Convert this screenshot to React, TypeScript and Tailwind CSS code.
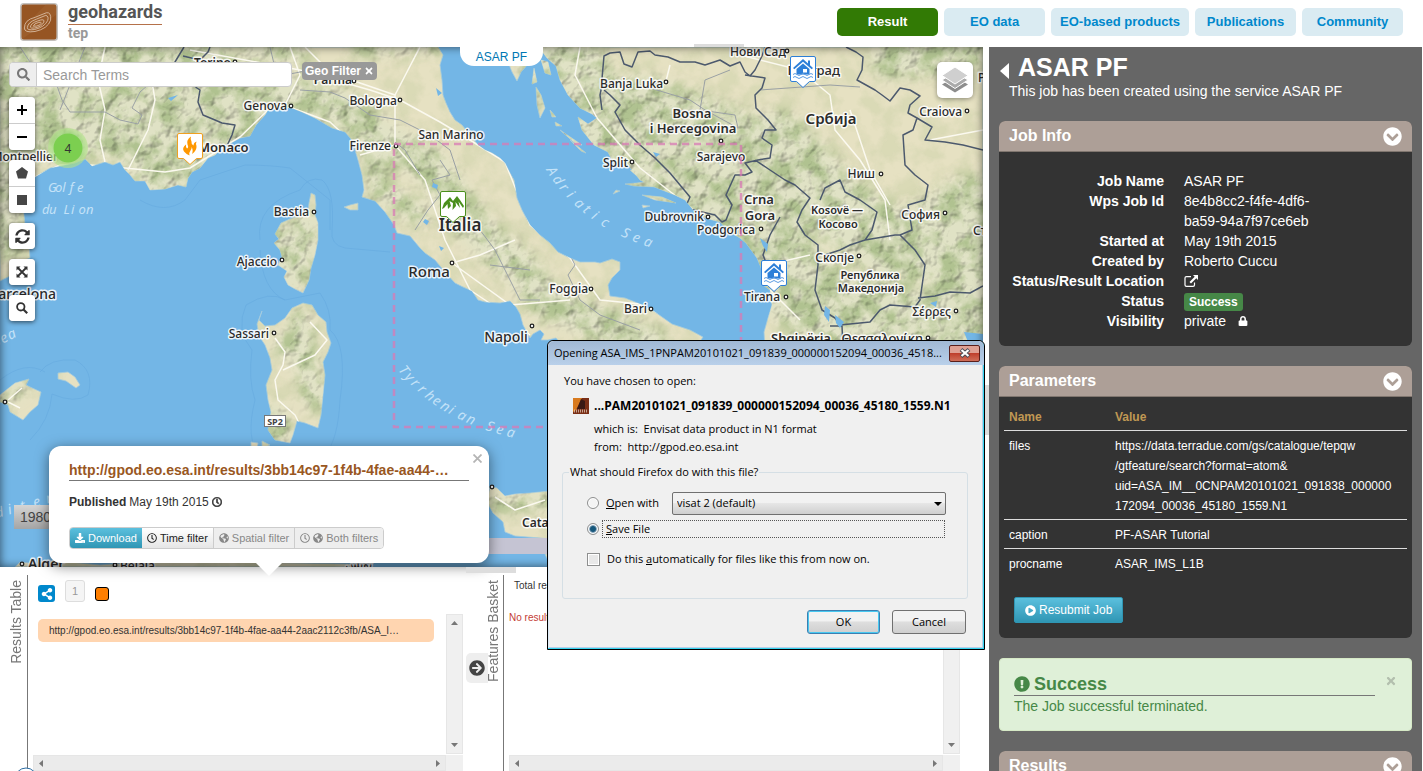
import { useState } from "react";
import type { ReactNode } from "react";
import {
  FaArrowCircleRight,
  FaChevronCircleDown,
  FaDownload,
  FaExclamationCircle,
  FaGlobeAmericas,
  FaLock,
  FaPlayCircle,
  FaRegClock,
  FaSearch,
  FaShareAlt,
  FaSyncAlt,
  FaTimes,
} from "react-icons/fa";

const LAND = [
  "M0 47L0 281L10 276L20 262L30 258L29 245L26 235L24 215L22 200L28 185L35 177L50 168L60 166L75 163L85 159L92 166L105 162L113 165L120 162L125 170L130 175L135 181L145 181L150 190L165 189L178 185L186 187L188 178L192 172L200 168L208 158L215 155L222 148L240 138L250 136L256 125L265 115L268 110L280 107L292 108L302 112L315 118L332 128L345 132L352 140L355 150L358 160L362 175L364 190L362 197L375 201L385 212L394 225L397 233L410 236L420 248L425 253L435 260L445 272L455 283L463 287L472 291L478 300L485 302L500 303L510 301L516 307L520 314L523 325L530 338L533 334L540 330L544 334L541 340L548 340L556 338L562 345L600 400L660 400L703 337L690 330L672 324L655 312L640 304L625 298L610 296L608 285L612 278L620 270L620 262L612 259L600 263L595 262L580 262L570 258L558 252L550 243L540 235L530 225L522 210L517 198L514 180L510 173L505 163L500 158L492 153L485 150L478 145L470 135L462 125L455 120L450 112L446 103L443 95L442 80L440 65L443 55L438 47Z",
  "M505 47L508 62L512 72L517 81L521 72L528 64L533 54L541 50L547 58L556 66L560 80L568 95L580 108L592 114L597 118L588 124L578 117L582 130L594 145L608 152L612 160L628 165L640 180L652 186L662 190L675 195L685 200L695 212L705 218L720 222L730 232L740 238L746 243L757 258L762 270L763 285L770 290L772 305L768 318L764 332L765 350L983 350L983 47Z",
  "M311 193L315 195L316 205L315 215L318 223L318 240L315 255L311 268L309 280L303 293L295 289L288 285L284 277L287 271L278 265L282 257L280 250L274 243L279 239L275 234L281 223L290 219L300 215L308 212L309 203Z",
  "M303 303L312 305L318 315L326 322L327 332L331 343L328 352L323 362L325 375L323 395L321 415L318 428L305 423L297 421L293 435L290 443L275 440L268 430L271 412L268 400L266 385L272 370L270 358L265 345L259 336L257 324L262 311L259 320L265 326L275 325L285 318L292 308Z",
  "M58 373L68 372L75 377L80 385L76 388L66 381L58 379Z",
  "M0 395L15 383L29 379L26 385L30 387L41 392L38 405L30 412L23 420L10 412L8 405L0 402Z",
  "M490 486L497 488L505 496L515 494L530 493L560 490L560 540L540 538L515 536L505 532L503 522L493 513L487 502Z",
  "M15 567L20 562L40 564L60 561L100 565L160 560L250 562L350 564L370 567Z",
  "M545 554L560 553L560 567L551 567Z",
  "M251 442L258 443L257 450L251 447Z M262 441L270 445L262 449Z",
  "M344 207L350 205L358 203L358 210L350 210Z M536 87L541 95L545 108L540 118L537 105Z M541 60L548 62L551 75L545 73Z M534 68L537 82L532 84Z",
  "M555 122L562 126L556 126Z M560 130L582 145L577 145Z M550 110L556 117L552 117Z M630 170L645 172L652 176L638 177Z M625 184L648 182L658 187L634 186Z M616 190L620 191L613 194Z M642 195L662 197L676 203L655 200Z M642 205L650 206L643 208Z M570 140L586 153L581 151Z",
];

const HILLS = [
  { d: "M0 70L60 60L130 75L200 70L230 110L160 140L110 120L30 130", w: 70 },
  { d: "M180 60L230 90L215 130L160 165", w: 62 },
  { d: "M0 170L5 240", w: 40 },
  { d: "M240 112L290 92L340 108L385 140L430 165L455 200L480 235L515 262L545 300L590 320L650 345", w: 36 },
  { d: "M372 150L380 190L420 215", w: 22 },
  { d: "M560 60L590 110L640 140L700 190L760 235L800 290L850 320L920 330", w: 80 },
  { d: "M640 110L700 130L790 170L840 210L900 250L970 210L960 330", w: 70 },
  { d: "M890 60L970 50M720 150L780 130L860 210", w: 40 },
  { d: "M285 240L295 275L305 225", w: 30 },
  { d: "M300 320L305 360L315 400M285 345L290 350M275 415L280 435", w: 24 },
  { d: "M490 505L560 500M0 400L20 388", w: 16 },
  { d: "M360 47L450 40M250 50L300 55", w: 20 },
];

const BORDERS =
  "M184 47L175 62L185 78L197 88L200 90L198 102L203 115L215 120L222 123L235 125L232 135L226 148M183 56L200 60L208 52L210 47M602 110L600 95L601 90L604 56L610 53L620 52L624 64L632 67L638 52L650 51L655 55L668 57L680 62L695 62L705 65L720 60L730 66L740 62L745 72L750 76L755 70L762 56L765 47M745 75L765 78L762 88L755 95L756 108L768 120L776 130L765 130L762 138L772 145L770 158L758 160L745 163L752 172L745 175L735 175L726 195L732 205L726 220L722 222M604 90L610 95L620 105L615 112L625 130L640 145L655 158L670 173L690 197L685 208L715 215L722 222M755 160L770 170L785 180L795 185L810 198L802 210L797 222L805 235L818 245L818 265L815 290L822 310L835 318L840 325L870 322L880 310L890 305L915 307L920 300L925 265L915 250L900 235L895 235L865 240L850 245L840 250L825 255M820 200L825 188L840 180L845 192L860 200L877 212L872 230L865 240M780 217L770 235L763 255L767 265L763 285M830 326L842 326L843 347M918 298L935 296L950 292L970 293L983 286M846 47L856 52L863 57L862 70L857 80L875 90L882 95L890 101L900 88L910 90L920 96L910 105L908 113L917 118L913 130L903 135L905 165L915 175L928 185L925 200L908 205L912 230L900 235M917 118L932 127L925 140L945 142L963 145L983 150";
const BORDERS_MINOR =
  "M20 47L30 62L42 66L55 80L62 100L70 112L85 112L105 112L120 120L138 124L142 115L132 108L140 92L148 85L170 83L175 78M60 110L85 47M270 47L275 68L290 74L310 70M300 90L330 92L345 98L370 115L400 120L430 135L450 150L460 180M440 160L450 175L432 180L440 195L428 210L415 230M480 230L495 250L510 280L520 300L540 300M420 175L405 150L395 142M490 265L530 270M640 85L690 100L705 110L738 128L735 115L700 110L705 80L730 70M760 90L830 85L860 87M570 255L575 265L568 275L580 300L600 315L640 330";
const ROADS =
  "M35 177L60 165L90 165L125 168L165 172L190 168L240 137L268 110L292 108L330 122L355 145M105 162L100 140L105 110L98 80L105 47M128 170L148 130L155 100L150 70M190 50L300 70L370 90L400 100L440 122L470 140L505 162L530 225L570 258L600 300L640 304L690 328M285 105L300 75L290 47M305 47L330 72L360 83L395 95L420 47M395 95L395 145L425 180L445 240L470 290L500 310L530 335M395 145L360 155M452 263L480 255L515 240M452 263L510 305L570 300M580 47L575 75L597 118L640 168L700 215M670 65L665 85M740 55L800 70L830 95L835 130L860 160L885 200L890 240M780 262L810 255M770 290L800 320M890 205L870 170L850 110M983 130L930 140M275 338L285 352L283 365L275 380L278 400L295 415L300 425M283 370L315 355L327 340L310 322M495 497L515 510L545 500M8 400L22 388M8 402L20 408";

type Label = [string, number, number, number, string, "end" | "middle" | "start"];
const LABELS: Label[] = [
  ["Torino", 231, 67, 12, "font-semibold", "end"],
  ["Parma", 352, 84, 12, "font-semibold", "end"],
  ["Genova", 287, 110, 12, "font-medium", "end"],
  ["Bologna", 397, 105, 12, "font-medium", "end"],
  ["San Marino", 451, 139, 12, "font-medium", "middle"],
  ["Firenze", 391, 150, 12, "font-medium", "end"],
  ["Monaco", 198, 152, 13, "font-semibold", "start"],
  ["Montpellier", 58, 161, 12, "font-medium", "end"],
  ["Bastia", 309, 216, 12, "font-medium", "end"],
  ["Ajaccio", 277, 266, 12, "font-medium", "end"],
  ["Sassari", 269, 338, 12, "font-medium", "end"],
  ["Barcelona", 56, 299, 14, "font-medium", "end"],
  ["Italia", 460, 231, 17, "font-semibold", "middle"],
  ["Roma", 429, 277, 15, "font-medium", "middle"],
  ["Napoli", 506, 342, 14, "font-medium", "middle"],
  ["Foggia", 588, 293, 12, "font-medium", "end"],
  ["Bari", 647, 313, 12, "font-medium", "end"],
  ["Catania", 522, 527, 12, "font-semibold", "start"],
  ["Нови Сад", 730, 56, 12, "font-medium", "start"],
  ["Београд", 840, 75, 13, "font-medium", "end"],
  ["Banja Luka", 663, 88, 12, "font-medium", "end"],
  ["Bosna", 692, 118, 13, "font-semibold", "middle"],
  ["i Hercegovina", 693, 133, 13, "font-semibold", "middle"],
  ["Sarajevo", 721, 161, 12, "font-medium", "middle"],
  ["Split", 628, 167, 12, "font-medium", "end"],
  ["Србија", 831, 124, 15, "font-semibold", "middle"],
  ["Ниш", 875, 178, 12, "font-medium", "end"],
  ["Craiova", 962, 116, 12, "font-medium", "end"],
  ["Pitești", 978, 82, 12, "font-medium", "start"],
  ["Crna", 759, 204, 13, "font-semibold", "middle"],
  ["Gora", 760, 220, 13, "font-semibold", "middle"],
  ["Kosovë —", 837, 214, 11, "font-semibold", "middle"],
  ["Косово", 838, 228, 11, "font-semibold", "middle"],
  ["София", 940, 219, 12, "font-medium", "end"],
  ["Стара Загора", 973, 235, 12, "font-medium", "start"],
  ["Dubrovnik", 704, 221, 12, "font-medium", "end"],
  ["Podgorica", 755, 234, 12, "font-medium", "end"],
  ["Скопје", 854, 262, 12, "font-medium", "end"],
  ["Република", 870, 279, 11, "font-semibold", "middle"],
  ["Македонија", 871, 292, 11, "font-semibold", "middle"],
  ["Tirana", 780, 301, 12, "font-medium", "end"],
  ["Σέρρες", 951, 316, 12, "font-medium", "end"],
  ["Shqipëria", 801, 343, 13, "font-semibold", "middle"],
  ["Θεσσαλονίκη", 923, 343, 13, "font-medium", "end"],
  ["Alger", 28, 569, 14, "font-semibold", "start"],
  ["Béjaïa", 120, 570, 12, "font-medium", "start"],
  ["تونس", 345, 568, 12, "font-medium", "start"],
];
const TOWNS = [
  [235, 62], [354, 81], [291, 106], [400, 100], [396, 146], [60, 156], [314, 212], [282, 260], [274, 333],
  [452, 263], [532, 326], [591, 289], [651, 309], [787, 51], [666, 82], [721, 141], [632, 162], [881, 174],
  [967, 111], [945, 213], [708, 217], [761, 229], [859, 256], [786, 297], [956, 311], [928, 338], [22, 564],
  [115, 565], [492, 487], [5, 402],
];

type Pt = [number, number];

/* Spreads the letters of a sea name along a quadratic curve. */
function SeaLabel({ text, from, via, to, size = 14 }: { text: string; from: Pt; via: Pt; to: Pt; size?: number }) {
  const steps = [...text].map((_, i) => {
    const t = i / (text.length - 1);
    const at = (k: 0 | 1) => (1 - t) ** 2 * from[k] + 2 * t * (1 - t) * via[k] + t * t * to[k];
    const slope = (k: 0 | 1) => 2 * (1 - t) * (via[k] - from[k]) + 2 * t * (to[k] - via[k]);
    return { x: at(0), y: at(1), r: (Math.atan2(slope(1), slope(0)) * 180) / Math.PI };
  });
  return (
    <text
      x={steps.map((s) => s.x.toFixed(1)).join(" ")}
      y={steps.map((s) => s.y.toFixed(1)).join(" ")}
      rotate={steps.map((s) => s.r.toFixed(1)).join(" ")}
      fontSize={size}
      className="fill-[#c3e2f8] italic"
    >
      {text}
    </text>
  );
}

function Pin({ x, y, color, children }: { x: number; y: number; color: string; children: ReactNode }) {
  return (
    <g transform={`translate(${x} ${y})`}>
      <path d="M2 0.500H24Q25.500 0.500 25.500 2V24Q25.500 25.500 24 25.500H19.500L13 31.500L6.500 25.500H2Q0.500 25.500 0.500 24V2Q0.500 0.500 2 0.500Z" fill="#fff" stroke={color} />
      {children}
    </g>
  );
}

function House() {
  return (
    <g fill="#2d7fd8" stroke="none">
      <path d="M13 3L3 12L4.300 13.300L13 5.800L21.700 13.300L23 12L20 9.300V4.500H18V7.500Z" />
      <path d="M13 7.500L6.500 13V18.500H19.500V13Z" />
      <rect x="13" y="13" width="4" height="3.500" fill="#fff" />
      <path d="M3 18.500Q5 16.500 7 18.500T11 18.500T15 18.500T19 18.500T23 18.500M3 21.500Q5 19.500 7 21.500T11 21.500T15 21.500T19 21.500T23 21.500" fill="none" stroke="#5b9be2" />
    </g>
  );
}

function MapCanvas() {
  return (
    <svg viewBox="0 47 983 520" preserveAspectRatio="xMinYMin slice" className="absolute inset-0 h-full w-full font-['Noto_Sans',sans-serif]" aria-label="Map of Italy and the Balkans">
      <defs>
        <clipPath id="land">
          {LAND.map((d) => <path key={d} d={d} />)}
        </clipPath>
        <filter id="soft" x="-20%" y="-20%" width="140%" height="140%">
          <feGaussianBlur stdDeviation="7" />
        </filter>
        <filter id="relief" x="0" y="0" width="100%" height="100%" colorInterpolationFilters="sRGB">
          <feTurbulence type="fractalNoise" baseFrequency="0.07" numOctaves="3" seed="7" result="n" />
          <feColorMatrix in="n" type="matrix" values="0 0 0 0 0  0 0 0 0 0  0 0 0 0 0  1 0 0 0 0" result="h" />
          <feDiffuseLighting in="h" surfaceScale="2.200" diffuseConstant="1.200" lightingColor="#fff">
            <feDistantLight azimuth="225" elevation="58" />
          </feDiffuseLighting>
        </filter>
        <filter id="woods" x="0" y="0" width="100%" height="100%" colorInterpolationFilters="sRGB">
          <feTurbulence type="fractalNoise" baseFrequency="0.05" numOctaves="4" seed="21" />
          <feColorMatrix type="matrix" values="0 0 0 0 0.660  0 0 0 0 0.740  0 0 0 0 0.530  3.200 0 0 0 -1.250" />
        </filter>
        <mask id="hills" maskUnits="userSpaceOnUse" x="0" y="47" width="983" height="520">
          <g filter="url(#soft)" fill="none" stroke="#fff" strokeLinejoin="round" strokeLinecap="round">
            {HILLS.map((h) => <path key={h.d} d={h.d} strokeWidth={h.w} />)}
          </g>
        </mask>
        <radialGradient id="cluster">
          <stop offset="0.7" stopColor="#7ccf50" />
          <stop offset="0.75" stopColor="#9fdc7c" stopOpacity="0.700" />
          <stop offset="1" stopColor="#b5e28c" stopOpacity="0.600" />
        </radialGradient>
      </defs>
      <rect y="47" width="983" height="520" fill="#73b6e6" />
      <g fill="none" stroke="#66aadf" opacity="0.600">
        <path d="M260 240Q255 205 300 190Q308 176 322 180Q335 190 332 230Q330 245 345 248L390 252M260 250Q262 290 285 300L320 293Q332 310 330 330Q348 345 340 400Q338 440 325 455L260 455Q245 440 255 400Q248 380 252 350Q235 330 246 305Q270 290 285 300M40 372Q50 358 75 360Q95 370 88 395Q75 404 52 394Q50 420 30 440M0 380Q25 360 45 372M140 200Q165 215 185 200L200 180L245 165Q270 165 290 168L330 200L330 230" />
      </g>
      <g fill="#e6e1c2" stroke="#a5cbe0" strokeWidth="0.800">
        {LAND.map((d) => <path key={d} d={d} />)}
      </g>
      <g clipPath="url(#land)">
        <rect y="47" width="983" height="520" filter="url(#woods)" opacity="0.200" />
        <g mask="url(#hills)">
          <rect y="47" width="983" height="520" fill="#d6d8b2" opacity="0.750" />
          <rect y="47" width="983" height="520" filter="url(#woods)" opacity="0.850" />
          <rect y="47" width="983" height="520" filter="url(#relief)" className="mix-blend-multiply" />
        </g>
        <path d={ROADS} fill="none" stroke="#fbf9ef" strokeWidth="1.500" strokeLinejoin="round" />
        <path d={BORDERS_MINOR} fill="none" stroke="#9aa0a4" strokeLinejoin="round" />
        <path d={BORDERS} fill="none" stroke="#4c596d" strokeWidth="1.500" strokeLinejoin="round" />
        <path d="M425 219L429 221L427 225L423 222ZM439 246L444 248L441 251ZM433 183L438 185L437 189L432 187ZM760 238L768 244L767 252L763 246ZM825 306L830 310L829 322L824 315ZM835 315L844 322L840 328L836 323ZM653 152L660 154L656 157ZM930 303L937 301L936 307ZM964 332L983 334V343L968 342ZM436 88L442 93L438 96ZM168 98L178 95L171 101Z" fill="#73b6e6" />
      </g>

      <g>
        <SeaLabel text="Golfe" from={[48, 192]} via={[62, 192]} to={[77, 192]} size={13} />
        <SeaLabel text="du Lion" from={[42, 214]} via={[63, 214]} to={[86, 214]} size={13} />
        <SeaLabel text="Adriatic Sea" from={[546, 170]} via={[578, 222]} to={[643, 245]} />
        <SeaLabel text="Tyrrhenian Sea" from={[398, 370]} via={[435, 418]} to={[506, 436]} />
        <SeaLabel text="Mediterranean Sea" from={[-28, 526]} via={[70, 495]} to={[180, 470]} />
        <SeaLabel text="Balearic Sea" from={[-78, 390]} via={[-30, 360]} to={[10, 340]} />
      </g>

      <g className="fill-[#2b2b2b]" stroke="#fff" strokeWidth="3" strokeOpacity="0.850" strokeLinejoin="round" paintOrder="stroke">
        {LABELS.map(([text, x, y, size, weight, anchor]) => (
          <text key={text} x={x} y={y} fontSize={size} textAnchor={anchor} className={weight}>{text}</text>
        ))}
      </g>
      <g fill="#fff" stroke="#222" strokeWidth="1.300">
        {TOWNS.map(([x, y]) => <circle key={`${x}-${y}`} cx={x} cy={y} r="1.800" />)}
      </g>
      <rect x="264.500" y="415.500" width="21" height="11" fill="#fff" stroke="#777" />
      <text x="275" y="425" fontSize="9" textAnchor="middle" className="fill-[#444] font-bold">SP2</text>

      <rect x="394" y="144" width="347" height="283" fill="none" stroke="#d87ab4" strokeOpacity="0.750" strokeWidth="2.500" strokeDasharray="7 5" />

      <circle cx="68" cy="148" r="20" fill="url(#cluster)" />
      <text x="68" y="153" fontSize="12" textAnchor="middle" className="fill-[#333]">4</text>
      <Pin x={177} y={133} color="#f0a020">
        <path d="M14 3.500Q9 7 10.500 11.500Q12 14.500 10 15.500Q8.500 14 9 11.500Q4.500 15 7 18.500Q9 21 12.500 22.500Q11.500 20 13.500 17.500Q15 15.500 14.500 14Q16.500 17 15 21Q20 17.500 19.500 13Q18.500 11 19.500 8.500Q16.500 9.500 16.500 12.500Q14 11 14.500 8.500Q13 6.500 14 3.500Z" fill="#ff9800" />
      </Pin>
      <Pin x={440} y={191} color="#4a8f1c">
        <path d="M2 18L4 12L10 6L13 10L17 5L20 9L24 15L23 17L18.500 10.500L20 17L15.500 11L16 15L12.500 19L13 12L9.500 10L11 15L8 18L7.500 13L4 17Z" fill="#4a8f1c" />
      </Pin>
      <Pin x={790} y={56} color="#2d7fd8"><House /></Pin>
      <Pin x={761} y={260} color="#2d7fd8"><House /></Pin>
    </svg>
  );
}

const toolGroup = "flex flex-col gap-px overflow-hidden rounded bg-[#ccc] shadow-[0_1px_5px_rgba(0,0,0,0.65)]";
const tool = "flex h-[26px] w-[26px] items-center justify-center bg-white text-[#333]";

function MapTools() {
  return (
    <div className="flex flex-col items-start gap-[10px]">
      <div className={toolGroup}>
        <button className={tool} aria-label="Zoom in">
          <svg width="12" height="12"><path d="M6 1V11M1 6H11" stroke="#000" strokeWidth="2" /></svg>
        </button>
        <button className={tool} aria-label="Zoom out">
          <svg width="12" height="12"><path d="M1 6H11" stroke="#000" strokeWidth="2" /></svg>
        </button>
      </div>
      <div className={toolGroup}>
        <button className={tool} aria-label="Draw a polygon">
          <svg width="12" height="12"><path d="M6 0L12 4.500L10 11.500H2L0 4.500Z" fill="#464646" /></svg>
        </button>
        <button className={tool} aria-label="Draw a rectangle">
          <svg width="10" height="10"><rect width="10" height="10" fill="#464646" /></svg>
        </button>
      </div>
      <div className={toolGroup}>
        <button className={tool} aria-label="Refresh"><FaSyncAlt size={15} /></button>
      </div>
      <div className={toolGroup}>
        <button className={tool} aria-label="Full screen">
          <svg width="12" height="12" viewBox="0 0 12 12"><path d="M2 2L10 10M10 2L2 10" stroke="#333" strokeWidth="1.800" /><path d="M0.500 0.500H4.500L0.500 4.500ZM11.500 0.500V4.500L7.500 0.500ZM0.500 11.500V7.500L4.500 11.500ZM11.500 11.500H7.500L11.500 7.500Z" fill="#333" /></svg>
        </button>
      </div>
      <div className={toolGroup}>
        <button className={tool} aria-label="Find a place">
          <svg width="12" height="12" viewBox="0 0 12 12"><circle cx="4.800" cy="4.800" r="3.700" fill="none" stroke="#333" strokeWidth="1.800" /><path d="M7.500 7.500L11.200 11.200" stroke="#333" strokeWidth="2.200" /></svg>
        </button>
      </div>
    </div>
  );
}

function ResultPopup() {
  const filter = "flex h-full items-center gap-[3px] px-[5px]";
  return (
    <div className="absolute bottom-1 left-[49px] w-[440px] rounded-xl bg-white shadow-[0_3px_14px_rgba(0,0,0,0.5)]">
      <button className="absolute top-1 right-1 flex h-4 w-4 items-center justify-center" aria-label="Close">
        <svg width="9" height="9"><path d="M0.500 0.500L8.500 8.500M8.500 0.500L0.500 8.500" stroke="#b5b5b5" strokeWidth="1.800" /></svg>
      </button>
      <div className="flex flex-col px-5 py-[14px] text-xs text-[#333]">
        <a href="#result" className="truncate border-b border-[#777] pr-4 text-sm leading-5 font-bold text-[#99571f]">
          http://gpod.eo.esa.int/results/3bb14c97-1f4b-4fae-aa44-2aac2112c3fb
        </a>
        <p className="flex items-center gap-[3px] pt-[11px] pb-[15px] leading-5">
          <b>Published</b> May 19th 2015 <FaRegClock size={10} strokeWidth={30} stroke="currentColor" />
        </p>
        <div className="flex h-[22px] w-fit overflow-hidden rounded border border-[#ccc] text-[11px]">
          <button className={`${filter} bg-linear-to-b from-[#5bc0de] to-[#2f96b4] text-white`}><FaDownload size={10} />Download</button>
          <button className={`${filter} border-r border-[#ccc] bg-linear-to-b from-white to-[#e6e6e6] text-[#222]`}><FaRegClock size={10} />Time filter</button>
          <button disabled className={`${filter} border-r border-[#ccc] bg-[#eee] text-[#888]`}><FaGlobeAmericas size={10} />Spatial filter</button>
          <button disabled className={`${filter} bg-[#eee] text-[#888]`}><FaRegClock size={10} /><FaGlobeAmericas size={10} />Both filters</button>
        </div>
      </div>
      <svg width="26" height="14" className="absolute top-full left-[207px]"><path d="M0 0H26L13 13Z" fill="#fff" /></svg>
    </div>
  );
}

function MapPanel() {
  return (
    <section className="relative min-h-0 flex-1">
      <div className="absolute inset-0 overflow-hidden">
        <MapCanvas />
        <div className="pointer-events-none absolute inset-0 shadow-[inset_0_0_10px_rgba(0,0,0,0.6)]" />
      </div>
      <div className="relative flex items-start justify-between">
        <div className="flex flex-col gap-[10px] px-[9px] pt-[15px]">
          <div className="flex items-start gap-[10px]">
            <div className="flex h-[25px] w-[283px] overflow-hidden rounded border border-[#ccc] bg-white">
              <label htmlFor="terms" className="flex w-[27px] items-center justify-center border-r border-[#ccc] bg-[#eee] text-[#777]"><FaSearch size={13} /></label>
              <input id="terms" placeholder="Search Terms" className="min-w-0 flex-1 px-[6px] text-sm placeholder:text-[#999] focus:outline-none" />
            </div>
            <button className="flex h-[18px] items-center gap-[3px] rounded bg-[#999] px-[3px] text-xs font-bold text-white">Geo Filter <FaTimes size={10} /></button>
          </div>
          <MapTools />
        </div>
        <button className="m-[15px] mr-[10px] flex h-9 w-9 items-center justify-center rounded-[5px] bg-white shadow-[0_1px_5px_rgba(0,0,0,0.4)]" aria-label="Layers">
          <svg width="26" height="26" viewBox="0 0 26 26">
            <path d="M13 9.500L26 17.500L13 25.500L0 17.500Z" fill="#8d8d8d" />
            <path d="M13 5L26 13L13 21.500L0 13Z" fill="#aaa" stroke="#fff" />
            <path d="M13 0L26 8.500L13 17L0 8.500Z" fill="#cfcfcf" stroke="#fff" />
          </svg>
        </button>
      </div>
      <a href="#asar" className="absolute top-0 left-[460px] flex h-[19px] w-[83px] items-center justify-center rounded-b-[14px] bg-white text-xs text-[#0077b3]">ASAR PF</a>
      <div className="absolute right-0 bottom-[13px] left-20 h-4 bg-[#c5c4d3]" />
      <div className="absolute bottom-[38px] left-[14px] h-6 w-20 bg-linear-to-b from-[#d5d5d5] to-[#a5a5a5] px-[6px] text-sm leading-6 text-[#444]">1980</div>
      <ResultPopup />
    </section>
  );
}

function Bar({ vertical }: { vertical?: boolean }) {
  return vertical ? (
    <div className="flex w-[17px] flex-col items-center justify-between border border-[#e6e6e6] bg-[#f0f0f0] py-[6px]">
      <svg width="7" height="4"><path d="M0 4L3.500 0L7 4Z" fill="#777" /></svg>
      <svg width="7" height="4"><path d="M0 0L3.500 4L7 0Z" fill="#777" /></svg>
    </div>
  ) : (
    <div className="flex h-4 items-center justify-between border border-[#e6e6e6] bg-[#ebebeb] px-[5px]">
      <svg width="4" height="7"><path d="M4 0L0 3.500L4 7Z" fill="#777" /></svg>
      <svg width="4" height="7"><path d="M0 0L4 3.500L0 7Z" fill="#777" /></svg>
    </div>
  );
}

function ScrollPane({ children }: { children: ReactNode }) {
  return (
    <div className="grid min-h-0 flex-1 grid-cols-[1fr_17px] grid-rows-[1fr_16px] gap-y-px">
      <div className="min-w-0">{children}</div>
      <Bar vertical />
      <Bar />
      <div className="bg-[#f0f0f0]" />
    </div>
  );
}

const sideTitle = "rotate-180 text-center text-sm leading-4 text-[#777] [writing-mode:vertical-rl]";

function Tables() {
  return (
    <section className="relative flex h-[204px] shrink-0 overflow-hidden pt-2">
      <div className="absolute top-0 left-[466px] h-[6px] w-[50px] bg-[#ddd]" />
      <div className="flex w-[466px] shrink-0">
        <h2 className={`${sideTitle} mt-[5px] mr-[3px] ml-2 h-fit`}>Results Table</h2>
        <div className="flex min-w-0 flex-1 flex-col border-l border-[#777] pr-[3px] pl-[5px]">
          <div className="flex h-[39px] items-start gap-[10px] pt-[5px] pl-[5px]">
            <button className="mt-[5px] flex h-[17px] w-[17px] items-center justify-center rounded-[3px] bg-[#0088cc] text-white" aria-label="Share"><FaShareAlt size={12} /></button>
            <button className="h-[22px] w-5 rounded-[3px] border border-[#ddd] bg-[#f5f5f5] text-[11px] text-[#999]">1</button>
            <button className="mt-[7px] h-[14px] w-[14px] rounded-[3px] border border-black bg-[#ff7f00]" aria-label="Track colour" />
          </div>
          <ScrollPane>
            <p className="mt-[5px] mr-3 ml-[5px] h-[23px] truncate rounded-[5px] bg-[#ffd5b0] pr-7 pl-[11px] text-[10px] leading-[23px] text-[#333]">
              http://gpod.eo.esa.int/results/3bb14c97-1f4b-4fae-aa44-2aac2112c3fb/ASA_IMS_1PNPAM20101021
            </p>
          </ScrollPane>
        </div>
      </div>
      <button className="mt-[78px] flex h-[30px] w-[22px] shrink-0 items-center justify-center rounded-l-[5px] bg-[#eee] text-[#444]" aria-label="Add to basket"><FaArrowCircleRight size={16} /></button>
      <h2 className={`${sideTitle} mt-[5px] -ml-[3px] h-fit shrink-0`}>Features Basket</h2>
      <div className="mr-[29px] ml-[2px] flex min-w-0 flex-1 flex-col border-l border-[#777] pl-[5px] text-[10px]">
        <p className="h-[35px] px-[5px] pt-[3px] leading-4 text-[#333]">Total results: 0</p>
        <ScrollPane>
          <p className="leading-4 text-[#c43c35]">No results</p>
        </ScrollPane>
      </div>
      <svg width="20" height="4" className="absolute bottom-0 left-4"><circle cx="10" cy="12" r="11" fill="#fff" stroke="#2b6ca3" /></svg>
    </section>
  );
}

function Card({ title, children }: { title: string; children: ReactNode }) {
  return (
    <section className="shrink-0 overflow-hidden rounded-md bg-[#333]">
      <header className="flex h-[31px] items-center justify-between border-b border-[#80766f] bg-[#ad9f97] px-[10px]">
        <h2 className="text-base font-bold text-white">{title}</h2>
        <button aria-label={`Collapse ${title}`}><FaChevronCircleDown size={19} /></button>
      </header>
      {children}
    </section>
  );
}

const INFO: [string, ReactNode][] = [
  ["Job Name", "ASAR PF"],
  ["Wps Job Id", "8e4b8cc2-f4fe-4df6-ba59-94a7f97ce6eb"],
  ["Started at", "May 19th 2015"],
  ["Created by", "Roberto Cuccu"],
  [
    "Status/Result Location",
    <a href="#status" aria-label="Open status" className="flex h-5 items-center">
      <svg width="14" height="12" viewBox="0 0 14 12">
        <path d="M7 1.700H2.500Q1 1.700 1 3V10Q1 11.300 2.500 11.300H9Q10.500 11.300 10.500 10V7.500" fill="none" stroke="#fff" strokeWidth="1.200" />
        <path d="M9 0H14V5L12.300 3.300L7 8.500L5.500 7L10.700 1.700Z" fill="#fff" />
      </svg>
    </a>,
  ],
  ["Status", <span className="inline-block rounded-[3px] bg-[#468847] px-[5px] text-xs leading-[18px] font-bold">Success</span>],
  ["Visibility", <span className="flex items-center gap-3">private <FaLock size={10} /></span>],
];

const PARAMS: [string, ReactNode][] = [
  ["files", <>https://data.terradue.com/gs/catalogue/tepqw<br />/gtfeature/search?format=atom&amp;<br />uid=ASA_IM__0CNPAM20101021_091838_000000<br />172094_00036_45180_1559.N1</>],
  ["caption", "PF-ASAR Tutorial"],
  ["procname", "ASAR_IMS_L1B"],
];

function Sidebar() {
  return (
    <aside className="mr-px flex w-[433px] shrink-0 flex-col overflow-hidden bg-[#666] px-[10px] text-sm leading-5 text-white">
      <div className="mb-5 flex h-[54px] shrink-0">
        <a href="#jobs" aria-label="Back" className="mt-4"><svg width="10" height="16"><path d="M10 0V16L1 8Z" fill="#fff" /></svg></a>
        <div>
          <h1 className="px-[9px] pt-[6px] text-[25px] leading-[29px] font-bold">ASAR PF</h1>
          <p className="leading-[18px]">This job has been created using the service ASAR PF</p>
        </div>
      </div>
      <div className="flex flex-col gap-5">
        <Card title="Job Info">
          <dl className="grid grid-cols-[165px_150px] gap-x-5 pt-[19px] pb-[15px]">
            {INFO.map(([name, value]) => (
              <div key={name} className="contents">
                <dt className="text-right font-bold whitespace-nowrap">{name}</dt>
                <dd>{value}</dd>
              </div>
            ))}
          </dl>
        </Card>
        <Card title="Parameters">
          <div className="px-[5px] pt-[5px] pb-[15px]">
            <table className="w-full border-collapse text-left text-xs leading-5">
              <thead>
                <tr className="text-[#c09853]"><th className="w-[106px] px-[5px] pt-[5px] pb-[3px]">Name</th><th className="px-[5px] pt-[5px] pb-[3px]">Value</th></tr>
              </thead>
              <tbody>
                {PARAMS.map(([name, value]) => (
                  <tr key={name} className="border-t border-[#ddd] align-top"><td className="px-[5px] pt-[5px] pb-[3px]">{name}</td><td className="px-[5px] pt-[5px] pb-[3px]">{value}</td></tr>
                ))}
              </tbody>
            </table>
            <button className="mt-5 ml-[10px] flex h-[26px] items-center gap-[3px] rounded-[2px] border border-[#2f96b4] bg-linear-to-b from-[#5bc0de] to-[#2f96b4] px-[10px] text-xs">
              <FaPlayCircle size={11} />Resubmit Job
            </button>
          </div>
        </Card>
        <section role="status" className="flex h-[73px] shrink-0 items-start gap-[10px] rounded border border-[#d6e9c6] bg-[#dff0d8] px-[14px] pt-[14px] text-[#468847]">
          <div className="flex-1">
            <h2 className="flex h-[23px] items-center gap-1 border-b border-[#777] text-lg font-bold"><FaExclamationCircle size={16} />Success</h2>
            <p>The Job successful terminated.</p>
          </div>
          <button aria-label="Dismiss" className="mt-[2px] text-[#b3bfae]"><FaTimes size={12} /></button>
        </section>
        <Card title="Results"><div className="h-20" /></Card>
      </div>
    </aside>
  );
}

const NAV = ["EO data", "EO-based products", "Publications", "Community"];

function Header() {
  return (
    <header className="relative flex h-[47px] shrink-0 justify-between px-5">
      <a href="#home" className="flex gap-[10px] pt-[3px]">
        <svg width="38" height="38" viewBox="0 0 38 38">
          <rect x="0.800" y="0.800" width="36.400" height="36.400" rx="3" fill="#965523" stroke="#c3c0bd" strokeWidth="1.600" />
          <path d="M1.600 36.400V26L26 1.600H36V12Z" fill="#a56838" opacity="0.400" />
          <g fill="none" stroke="#dcc0a8" strokeWidth="0.800" transform="rotate(-8 18 21)">
            <path d="M4 23Q5 15 16 14L28 11Q33 11 31 19Q27 27 14 28Q3 28 4 23Z" />
            <path d="M7 23Q8 18 17 16L27 13.500Q30 15 28 19Q24 25 14 26Q6 26 7 23Z" />
            <path d="M10 23Q11 19 18 18Q26 16 24 20Q21 24.500 14 24.500Q10 24.500 10 23Z" />
            <path d="M13 22.500Q14 20 19 19.500Q23 19.500 20 22Q16 23.500 13 22.500Z" />
          </g>
        </svg>
        <span className="flex flex-col font-['Roboto',sans-serif] font-bold">
          <span className="h-[22px] border-b border-[#b5714a] text-lg leading-[18px] text-[#555]">geohazards</span>
          <span className="pt-px text-sm leading-[14px] text-[#999]">tep</span>
        </span>
      </a>
      <nav className="flex items-start gap-[6px] pt-2 text-[13px] font-bold">
        <a href="#result" className="flex h-7 min-w-[101px] items-center justify-center rounded-[5px] bg-[#327a05] px-[9px] text-white">Result</a>
        {NAV.map((item) => (
          <a key={item} href="#section" className="flex h-7 min-w-[101px] items-center justify-center rounded-[5px] bg-[#daebf2] px-[9px] text-[#0088cc]">{item}</a>
        ))}
      </nav>
      <div className="absolute bottom-0 left-[694px] h-[3px] w-[50px] bg-[#ddd]" />
    </header>
  );
}

function DownloadDialog() {
  const [choice, setChoice] = useState("save");
  const radio = "h-3 w-3 shrink-0 appearance-none rounded-full border border-[#8e8f8f] bg-[#f4f4f4] shadow-[inset_0_0_0_1px_#fff] checked:bg-radial checked:from-[#16587c] checked:from-35% checked:to-[#d8e2ea] checked:to-60%";
  const push = "h-6 rounded-[3px] border bg-linear-to-b from-[#f2f2f2] from-45% via-[#dedede] via-50% to-[#cfcfcf]";
  return (
    <div role="dialog" aria-label="Opening file" className="absolute top-[340px] left-[547px] w-[438px] rounded-t-md border border-black bg-[#b9cfe7] font-['Open_Sans',sans-serif] text-[11px] leading-4 text-black shadow-[inset_-1px_-1px_0_#35d4f0,inset_1px_1px_0_#dceaf7]">
      <header className="flex h-6 items-center justify-between rounded-t-md bg-linear-to-b from-[#a0b8d4] to-[#b9d0ea] pr-1 pl-[6px]">
        <h2 className="truncate text-[11px]">Opening ASA_IMS_1PNPAM20101021_091839_000000152094_00036_4518...</h2>
        <button aria-label="Close" className="flex h-[17px] w-[31px] shrink-0 items-center justify-center rounded-[2px] border border-[#5a1f1b] bg-linear-to-b from-[#dfa093] from-45% via-[#bf3f2c] via-50% to-[#cf6d58]">
          <svg width="12" height="10"><path d="M2 1.500L10 8.500M10 1.500L2 8.500" stroke="#4a4a55" strokeWidth="4" /><path d="M2.500 2L9.500 8M9.500 2L2.500 8" stroke="#fff" strokeWidth="2.200" /></svg>
        </button>
      </header>
      <div className="mr-[2px] mb-[2px] ml-px flex flex-col bg-[#f0f0f0] px-[14px] pt-2 pb-[13px]">
        <p className="pl-px">You have chosen to open:</p>
        <div className="flex gap-[5px] pt-[9px] pl-[10px]">
          <svg width="16" height="16" className="shrink-0"><rect width="16" height="16" fill="#7a2f16" /><path d="M0 0H9L3 12L0 14Z" fill="#d87a1e" /><path d="M8 1L4 11H12V3Z" fill="#3a1a14" /><path d="M1 13H15" stroke="#e8d5c5" strokeWidth="3" strokeDasharray="1 1" opacity="0.700" /></svg>
          <div>
            <p className="text-xs leading-4 font-bold whitespace-nowrap">...PAM20101021_091839_000000152094_00036_45180_1559.N1</p>
            <p className="pt-[7px]">which is:&nbsp; Envisat data product in N1 format</p>
            <p className="pt-[2px]">from:&nbsp; http://gpod.eo.esa.int</p>
          </div>
        </div>
        <fieldset className="mt-[9px] -ml-px flex h-[135px] flex-col rounded-[3px] border border-[#d5dfe5] pr-[21px] pl-6">
          <legend className="-ml-[18px] px-px">What should Firefox do with this file?</legend>
          <div className="mt-[11px] flex h-6 items-center">
            <input id="open" type="radio" name="action" className={radio} checked={choice === "open"} onChange={() => setChoice("open")} />
            <label htmlFor="open" className="w-[73px] shrink-0 pl-[7px]"><u>O</u>pen with</label>
            <span className="relative flex flex-1">
              <select aria-label="Application" className="h-[23px] w-full appearance-none rounded-[2px] border border-[#707070] bg-linear-to-b from-[#f2f2f2] from-45% via-[#e6e6e6] via-50% to-[#cfcfcf] px-1">
                <option>visat 2 (default)</option>
              </select>
              <svg width="8" height="4" className="pointer-events-none absolute top-[10px] right-1"><path d="M0 0H8L4 4Z" /></svg>
            </span>
          </div>
          <div className="mt-[5px] flex h-[18px] items-center gap-[3px]">
            <input id="save" type="radio" name="action" className={radio} checked={choice === "save"} onChange={() => setChoice("save")} />
            <label htmlFor="save" className="mr-px h-[18px] flex-1 border border-dotted border-[#555] pl-[3px]"><u>S</u>ave File</label>
          </div>
          <div className="mt-3 flex h-[18px] items-center gap-[7px]">
            <input id="auto" type="checkbox" className="h-[13px] w-[13px] shrink-0 appearance-none border border-[#8e8f8f] bg-[#e8e8e8] shadow-[inset_0_0_0_1px_#fff]" />
            <label htmlFor="auto">Do this <u>a</u>utomatically for files like this from now on.</label>
          </div>
        </fieldset>
        <div className="mt-[11px] flex justify-end gap-3 pr-[2px]">
          <button className={`${push} w-[73px] border-[#3c7fb1] shadow-[inset_0_0_0_1px_#48c8f0]`}>OK</button>
          <button className={`${push} w-[74px] border-[#707070]`}>Cancel</button>
        </div>
      </div>
    </div>
  );
}

export default function App() {
  return (
    <div className="relative flex h-screen flex-col overflow-hidden bg-white font-['Liberation_Sans',Arial,sans-serif]">
      <Header />
      <div className="flex min-h-0 flex-1">
        <main className="relative flex min-w-0 flex-1 flex-col">
          <div className="flex min-h-0 flex-1 pr-[6px]"><MapPanel /></div>
          <Tables />
          <div className="absolute top-[338px] right-0 h-[50px] w-1 bg-[#ddd]" />
        </main>
        <Sidebar />
      </div>
      <DownloadDialog />
    </div>
  );
}
